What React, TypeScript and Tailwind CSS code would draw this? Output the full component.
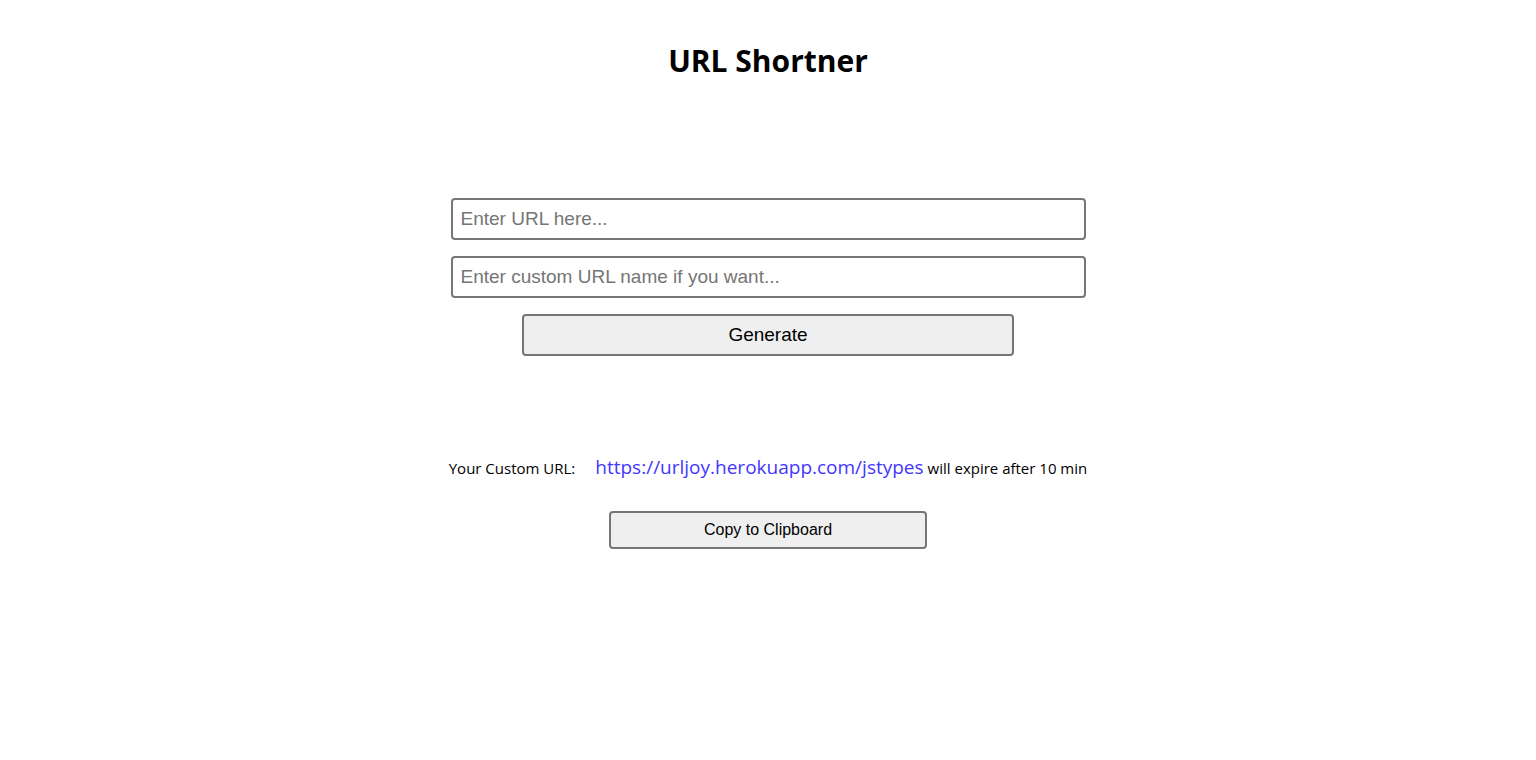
import { useState } from "react";
import type { FormEvent } from "react";

const SHORT_URL = "https://urljoy.herokuapp.com/jstypes";

export default function App() {
  const [url, setUrl] = useState("");
  const [customName, setCustomName] = useState("");

  const handleSubmit = (event: FormEvent) => {
    event.preventDefault();
  };

  const copyLink = () => {
    void navigator.clipboard?.writeText(SHORT_URL);
  };

  const fieldClass =
    "h-[42px] w-full rounded border-2 border-[#767676] bg-white px-2 font-['Liberation_Sans',Arial,sans-serif] text-[19px] text-black placeholder:text-[#757575]";

  return (
    <main className="flex min-h-screen flex-col items-center bg-white px-4 pt-10 font-['Open_Sans','Noto_Sans',sans-serif] text-black">
      <h1 className="text-[30px] leading-[42px] font-bold">URL Shortner</h1>

      <form
        onSubmit={handleSubmit}
        className="mt-[116px] flex w-full max-w-[635px] flex-col items-center gap-4"
      >
        <input
          type="text"
          aria-label="URL"
          placeholder="Enter URL here..."
          value={url}
          onChange={(event) => setUrl(event.target.value)}
          className={fieldClass}
        />
        <input
          type="text"
          aria-label="Custom URL name"
          placeholder="Enter custom URL name if you want..."
          value={customName}
          onChange={(event) => setCustomName(event.target.value)}
          className={fieldClass}
        />
        <button
          type="submit"
          className="h-[42px] w-full max-w-[492px] cursor-pointer rounded border-2 border-[#767676] bg-[#efefef] font-['Liberation_Sans',Arial,sans-serif] text-[19px]"
        >
          Generate
        </button>
      </form>

      <section className="mt-[95px] flex w-full flex-col items-center gap-[27px]">
        <p className="text-[15px] leading-8">
          Your Custom URL:
          <a href={SHORT_URL} className="mr-1 ml-5 text-[19px] text-[#4336ff]">
            {SHORT_URL}
          </a>
          will expire after 10 min
        </p>
        <button
          type="button"
          onClick={copyLink}
          className="h-[38px] w-full max-w-[318px] cursor-pointer rounded border-2 border-[#767676] bg-[#efefef] font-['Liberation_Sans',Arial,sans-serif] text-[16px]"
        >
          Copy to Clipboard
        </button>
      </section>
    </main>
  );
}
